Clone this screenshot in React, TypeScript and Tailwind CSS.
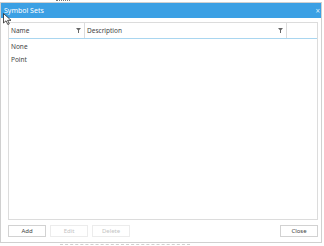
import React from "react";

const Funnel = () => (
  <svg width="5" height="5" viewBox="0 0 5 5" className="shrink-0">
    <path d="M0 0H5L3 2.2V5H2V2.2Z" fill="#666" />
  </svg>
);

const Cursor = () => (
  <svg width="9" height="12" viewBox="0 0 9 12" className="absolute left-[3px] top-[13px]">
    <path d="M0.5 0.5V10L3 7.8L4.8 11.5L6.3 10.8L4.6 7.3H8Z" fill="#fff" stroke="#222" strokeWidth="0.8" />
  </svg>
);

const Btn = ({ label, disabled }: { label: string; disabled?: boolean }) => (
  <div
    className={
      "w-[38px] h-[12px] flex items-center justify-center border text-[6px] " +
      (disabled ? "border-[#ececec] text-[#c4c4c4]" : "border-[#d2d2d2] text-[#444]")
    }
  >
    {label}
  </div>
);

export default function App() {
  return (
    <div className="relative w-[324px] h-[246px] bg-white overflow-hidden" style={{ fontFamily: "'Noto Sans', 'Liberation Sans', sans-serif" }}>
      {/* background marks */}
      <div className="absolute left-[56px] top-0 w-[14px] h-[2px] border-t border-dotted border-[#777]" />
      <div className="absolute left-[60px] top-[244px] w-[130px] border-t border-dashed border-[#cfcfcf]" />

      <div className="mt-[2px] w-[322px] h-[241px] border border-[#d0d0d0] bg-white flex flex-col">
        {/* title bar */}
        <div className="h-[15px] bg-[#3ba0e4] flex items-center justify-between pl-[3px] pr-[1px] text-white text-[7px] leading-none">
          <span>Symbol Sets</span>
          <span className="text-[8px] text-[#d6ecfa] leading-none">×</span>
        </div>

        <div className="flex-1 flex flex-col pl-[7px] pr-[3px] pt-[4px]">
          {/* grid */}
          <div className="h-[198px] border border-[#dcdcdc] flex flex-col text-[6.5px] text-[#444]">
            <div className="h-[16px] flex border-b border-[#a9d6f0] shrink-0">
              <div className="w-[76px] flex items-center justify-between pl-[2px] pr-[3px] border-r border-[#dcdcdc]">
                <span>Name</span>
                <Funnel />
              </div>
              <div className="w-[202px] flex items-center justify-between pl-[2px] pr-[3px] border-r border-[#dcdcdc]">
                <span>Description</span>
                <Funnel />
              </div>
              <div className="flex-1" />
            </div>
            <div className="flex flex-col pt-[1px]">
              <div className="h-[13px] flex items-center pl-[2px]">None</div>
              <div className="h-[13px] flex items-center pl-[2px]">Point</div>
            </div>
          </div>

          {/* buttons */}
          <div className="mt-[5px] flex items-center">
            <div className="flex gap-[4px]">
              <Btn label="Add" />
              <Btn label="Edit" disabled />
              <Btn label="Delete" disabled />
            </div>
            <div className="ml-auto">
              <Btn label="Close" />
            </div>
          </div>
        </div>
      </div>

      <Cursor />
    </div>
  );
}
